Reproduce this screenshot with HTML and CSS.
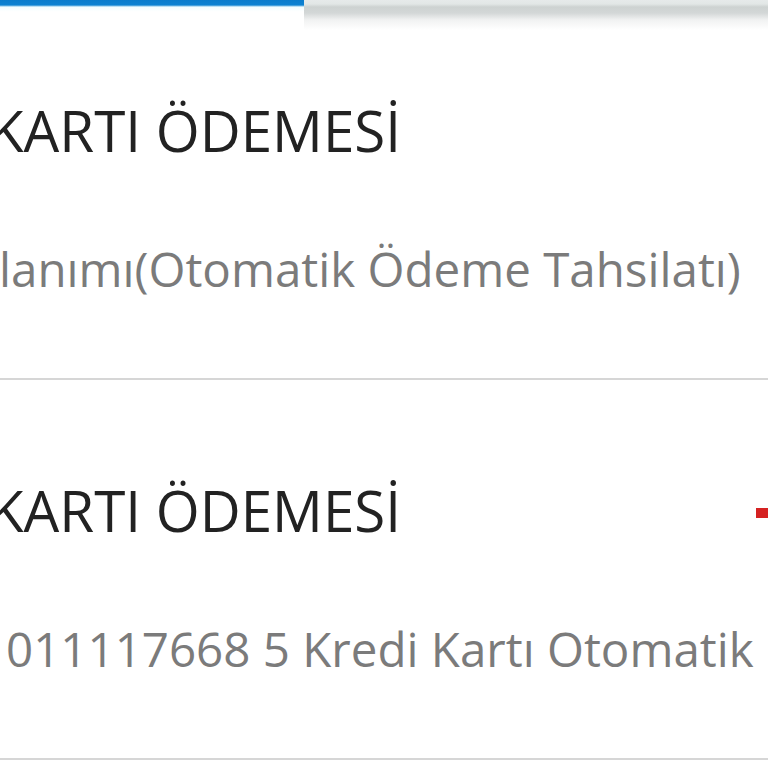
FILE: index.html
```html
<!DOCTYPE html>
<html lang="tr">
<head>
<meta charset="utf-8">
<link rel="stylesheet" href="styles.css">
</head>
<body>
<div class="page">
  <div class="tabbar">
    <div class="tab tab-active"></div>
    <div class="tab tab-idle"></div>
  </div>
  <ul class="list">
    <li class="item">
      <div class="head">
        <span class="title title-1">KARTI ÖDEMESİ</span>
      </div>
      <div class="desc desc-1">lanımı(Otomatik Ödeme Tahsilatı)</div>
    </li>
    <li class="item">
      <div class="head">
        <span class="title title-1">KARTI ÖDEMESİ</span>
        <span class="amount"></span>
      </div>
      <div class="desc desc-2">011117668 5 Kredi Kartı Otomatik</div>
    </li>
  </ul>
</div>
</body>
</html>
```
FILE: styles.css
```css
html, body {
  margin: 0;
  padding: 0;
  background: #ffffff;
}
.page {
  position: relative;
  width: 768px;
  height: 768px;
  overflow: hidden;
  font-family: "Open Sans", "Noto Sans", sans-serif;
}
.tabbar {
  position: absolute;
  top: 0;
  left: 0;
  right: 0;
  display: flex;
  height: 30px;
}
.tab-active {
  width: 304px;
  background: linear-gradient(to bottom, #0a7ccc 0, #0d82d2 5px, #f2fdff 7px, #ffffff 12px, rgba(255,255,255,0) 30px);
}
.tab-idle {
  flex: 1;
  background: linear-gradient(to bottom, #e6eaea 0, #e2e7e6 4px, #cdd2d1 7px, #d3d7d7 13px, #f1f2f2 20px, rgba(255,255,255,0) 30px);
}
.list {
  list-style: none;
  margin: 0;
  padding: 0;
}
.item {
  padding: 97px 0 79px 0;
  border-bottom: 2px solid #d6d6d6;
}
.head {
  display: flex;
  justify-content: space-between;
  align-items: center;
  height: 68px;
}
.title {
  font-size: 56.5px;
  line-height: 68px;
  color: #222222;
  white-space: nowrap;
}
.title-1 {
  margin-left: -11px;
}
.amount {
  width: 12px;
  height: 10px;
  background: #d52222;
  margin-top: 4px;
}
.desc {
  margin-top: 74px;
  font-size: 47.5px;
  line-height: 60px;
  color: #7b7b7b;
  white-space: nowrap;
}
.desc-1 {
  margin-left: -1px;
}
.desc-2 {
  margin-left: 6px;
}
```
